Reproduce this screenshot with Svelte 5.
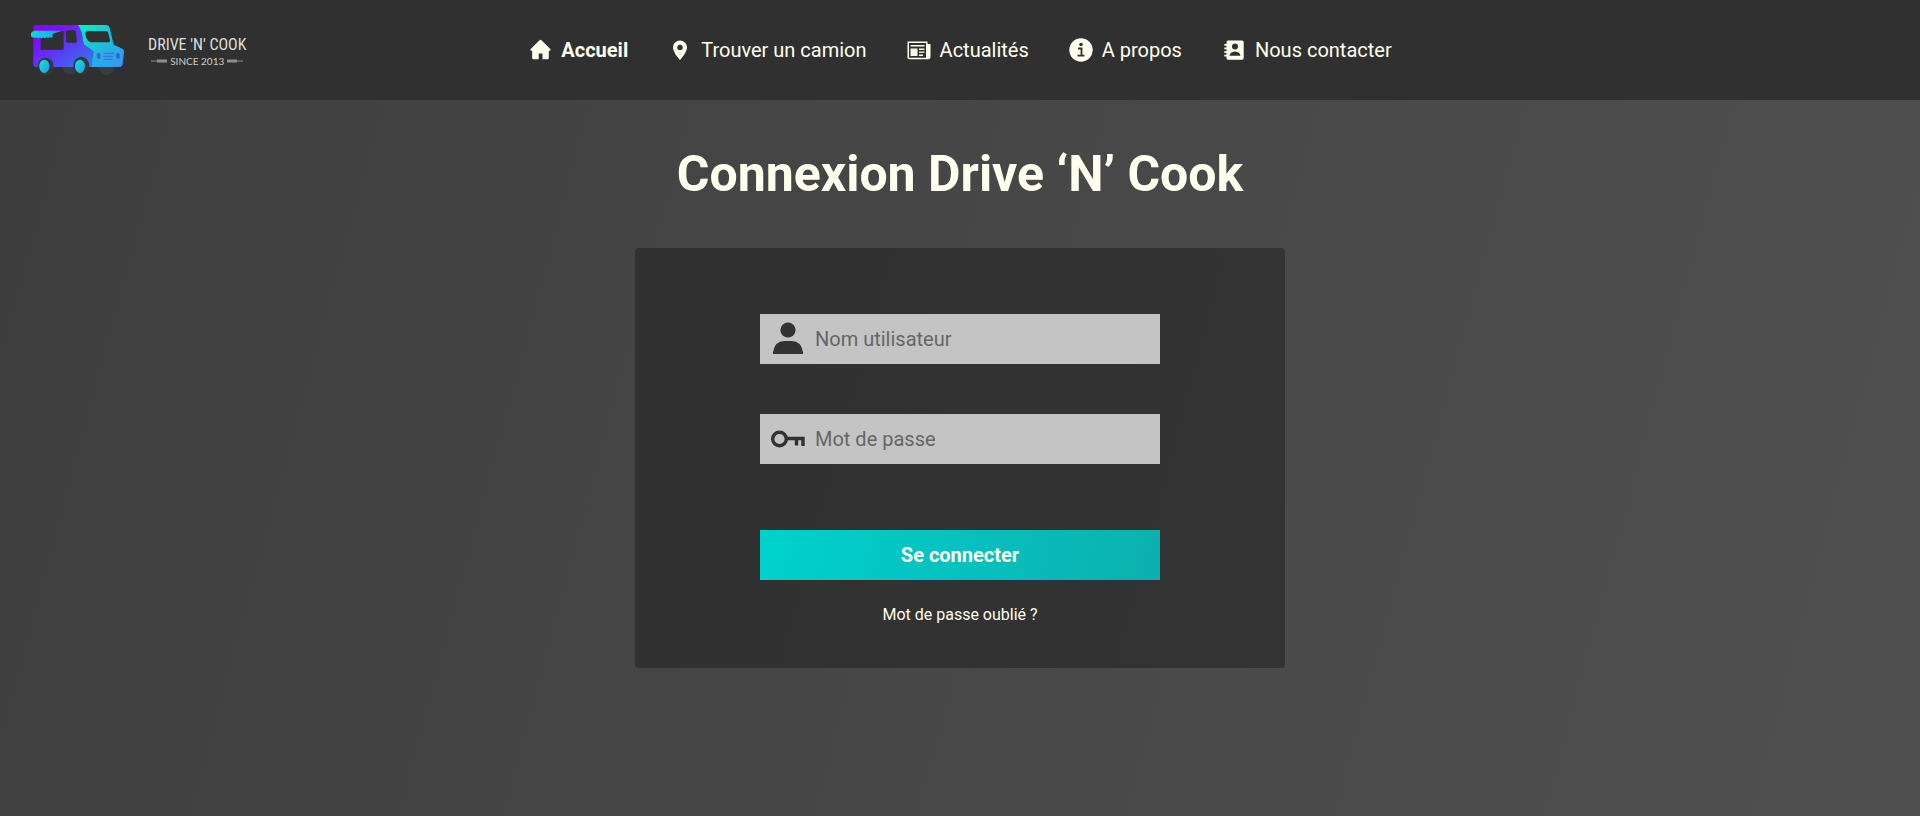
<script>
  const links = [
    { label: 'Accueil', icon: 'home', active: true },
    { label: 'Trouver un camion', icon: 'pin' },
    { label: 'Actualités', icon: 'news' },
    { label: 'A propos', icon: 'info' },
    { label: 'Nous contacter', icon: 'contact' }
  ];
</script>

<div class="page">
  <header>
    <a class="brand" href="#accueil">
      <svg class="truck" viewBox="30 36 288 168" aria-hidden="true">
        <defs>
          <linearGradient id="body" x1="0" y1="0" x2="1" y2="1">
            <stop offset="0" stop-color="#8c00ff" />
            <stop offset="0.3" stop-color="#7218fb" />
            <stop offset="1" stop-color="#2f80e8" />
          </linearGradient>
          <linearGradient id="cab" x1="0" y1="0" x2="0.8" y2="1">
            <stop offset="0" stop-color="#06f0c4" />
            <stop offset="0.5" stop-color="#18c2da" />
            <stop offset="1" stop-color="#329af0" />
          </linearGradient>
          <linearGradient id="awning" x1="0" y1="0" x2="1" y2="0">
            <stop offset="0" stop-color="#10d8d6" />
            <stop offset="0.7" stop-color="#1bb0e4" />
            <stop offset="1" stop-color="#4a5af2" />
          </linearGradient>
          <linearGradient id="wheel" x1="0" y1="0" x2="1" y2="1">
            <stop offset="0" stop-color="#08ead0" />
            <stop offset="1" stop-color="#2b96e8" />
          </linearGradient>
        </defs>
        <ellipse cx="150" cy="172" rx="22" ry="22" fill="#3b3b3e" />
        <ellipse cx="260" cy="172" rx="22" ry="23" fill="#3b3b3e" />
        <path d="M50 45H180L190 98L222 122L218 171H48Q40 171 40 162V55Q40 45 50 45Z" fill="url(#body)" />
        <path d="M174 45H258Q266 45 269 54L281 104L307 116Q313 119 312 127L308 162Q307 171 298 171H215L221 124L192 103Q187 90 187 78Q182 55 174 45Z" fill="url(#cab)" />
        <path d="M62 75L98 70L126 63H131V119H62Z" fill="#303030" />
        <path d="M143 61H161Q166 61 167 66L171 93Q171 98 166 98H142Q138 98 138 93V66Q138 61 143 61Z" fill="#303030" />
        <path d="M204 63H257Q263 63 265 69L270 90Q271 97 264 97H214Q207 97 203 91Q196 80 196 71Q196 63 204 63Z" fill="#303030" />
        <path d="M43 62H127L98 71V80Q94 86 90 81Q85 87 80 82Q75 88 70 82Q65 88 60 82Q55 88 51 82Q46 86 42 82Q36 84 33 79V70Q33 66 43 62Z" fill="url(#awning)" />
        <ellipse cx="77" cy="170" rx="24" ry="27" fill="#37373a" />
        <ellipse cx="184" cy="168" rx="24" ry="28" fill="#37373a" />
        <ellipse cx="73" cy="169" rx="15" ry="20" fill="url(#wheel)" />
        <ellipse cx="180" cy="169" rx="15" ry="20" fill="url(#wheel)" />
        <ellipse cx="236" cy="138" rx="6" ry="9" fill="#5654e6" />
        <ellipse cx="294" cy="138" rx="6" ry="9" fill="#5654e6" />
        <path d="M251 130H282M249 139H280M251 148H278" stroke="#3f68e0" stroke-width="3" />
      </svg>
      <span class="wordmark">
        <span class="name">DRIVE 'N' COOK</span>
        <span class="since">
          <svg viewBox="0 0 16 6" aria-hidden="true"><path d="M0 2.500H6V1.500H16V4.500H6V3.500H0Z" fill="#8e8e8e" /></svg>
          SINCE 2013
          <svg viewBox="0 0 16 6" aria-hidden="true"><path d="M16 2.500H10V1.500H0V4.500H10V3.500H16Z" fill="#8e8e8e" /></svg>
        </span>
      </span>
    </a>

    <nav>
      {#each links as link}
        <a href="#{link.icon}" class:active={link.active}>
          <svg viewBox="0 0 24 24" fill="currentColor" aria-hidden="true">
            {#if link.icon === 'home'}
              <path d="M12.500 1.800Q13 1.800 13.500 2.300L22.500 11.300Q23 12.800 21.700 12.800H20.800V20Q20.800 21.300 19.500 21.300H14.500V15.500H10.700V21.300H5.500Q4.200 21.300 4.200 20V12.800H3.200Q2 12.800 2.500 11.300L11.500 2.300Q12 1.800 12.500 1.800Z" />
            {:else if link.icon === 'pin'}
              <path fill-rule="evenodd" d="M12 2.500a7 7 0 0 0-7 7C5 14.500 12 22 12 22s7-7.500 7-12.500a7 7 0 0 0-7-7Zm0 4.200a2.700 2.700 0 1 1 0 5.400 2.700 2.700 0 0 1 0-5.400Z" />
            {:else if link.icon === 'news'}
              <path fill-rule="evenodd" d="M.5 3.500H20.500V6H23.500V19Q23.500 21.200 21.300 21.200H2.200Q.5 21.200 .5 19.500ZM2 5V19.700H19V5ZM3.500 7H17.500V8.500H3.500ZM3.500 10.500H10.500V18H3.500ZM12 10.500H17.500V12H12ZM12 13.500H17.500V14.800H12ZM12 16.500H16V18H12Z" />
            {:else if link.icon === 'info'}
              <circle cx="12" cy="12" r="11.700" />
              <circle cx="12" cy="6.500" r="1.800" fill="#303030" />
              <path d="M9 10.500H12.500V17.600M8.500 17.600H15.500" stroke="#303030" stroke-width="1.800" fill="none" />
            {:else}
              <path d="M6 2.500H20Q21.700 2.500 21.700 4.200V20Q21.700 21.800 20 21.800H6Q4.500 21.800 4.500 20V18.500H2.300V16.800H4.500V15H2.300V13.300H4.500V11.300H2.300V9.600H4.500V7.800H2.300V6.100H4.500V4Q4.500 2.500 6 2.500Z" />
              <circle cx="13" cy="8.600" r="3" fill="#303030" />
              <path d="M7.500 17.800Q8 13.800 13 13.500Q18 13.800 18.500 17.800Z" fill="#303030" />
            {/if}
          </svg>
          {link.label}
        </a>
      {/each}
    </nav>
  </header>

  <main>
    <h1>Connexion Drive ‘N’ Cook</h1>

    <form>
      <label class="field">
        <svg viewBox="0 0 34 34" fill="#323232" aria-hidden="true">
          <circle cx="17" cy="8" r="7.600" />
          <path d="M2 32V30Q4 19 13 19H21Q30 19 32 30V32Z" />
        </svg>
        <input type="text" placeholder="Nom utilisateur" aria-label="Nom utilisateur" />
      </label>
      <label class="field">
        <svg viewBox="0 0 34 34" fill="none" stroke="#323232" stroke-width="3.400" aria-hidden="true">
          <circle cx="8.500" cy="17" r="6.800" />
          <path d="M15.500 16.500H32V24M25.500 16.500V23.500" />
        </svg>
        <input type="password" placeholder="Mot de passe" aria-label="Mot de passe" />
      </label>
      <button type="button">Se connecter</button>
      <a class="forgot" href="#oubli">Mot de passe oublié ?</a>
    </form>
  </main>
</div>

<style>
  :global(body) {
    margin: 0;
  }

  .page {
    display: flex;
    flex-direction: column;
    min-height: 100vh;
    background: linear-gradient(105deg, #3e3e3e, #505050);
    color: #ffffee;
    font-family: Roboto, sans-serif;
    font-size: 20px;
  }

  a {
    color: inherit;
    text-decoration: none;
  }

  header {
    display: grid;
    grid-template-columns: 1fr auto 1fr;
    align-items: center;
    min-height: 100px;
    padding: 0 30px;
    box-sizing: border-box;
    background: #303030;
  }

  .brand {
    display: flex;
    align-items: center;
    gap: 22px;
  }

  .truck {
    width: 96px;
    height: 56px;
  }

  .wordmark {
    display: flex;
    flex-direction: column;
    align-items: center;
    padding-top: 2px;
    color: #dedede;
  }

  .name {
    font-family: "Liberation Sans Narrow", "Roboto Condensed", Roboto, sans-serif;
    font-size: 16px;
    line-height: 20px;
    white-space: nowrap;
  }

  .since {
    display: flex;
    align-items: center;
    gap: 3px;
    color: #cccccc;
    font-family: Lato, sans-serif;
    font-size: 10px;
    line-height: 12px;
    white-space: nowrap;
  }

  .since svg {
    width: 16px;
    height: 6px;
  }

  nav {
    display: flex;
    gap: 40px;
  }

  nav a {
    display: flex;
    align-items: center;
    gap: 9px;
    white-space: nowrap;
  }

  nav svg {
    width: 24px;
    height: 24px;
  }

  .active {
    font-weight: 700;
  }

  main {
    display: flex;
    flex-direction: column;
    align-items: center;
    padding: 44px 20px;
  }

  h1 {
    margin: 0 0 44px;
    font-size: 50px;
    line-height: 60px;
    font-weight: 700;
    text-align: center;
  }

  form {
    display: flex;
    flex-direction: column;
    align-items: center;
    width: 100%;
    max-width: 650px;
    padding: 66px 20px 42px;
    box-sizing: border-box;
    border-radius: 4px;
    background: linear-gradient(105deg, #313131, #333333);
  }

  .field,
  button {
    width: 100%;
    max-width: 400px;
    height: 50px;
    box-sizing: border-box;
  }

  .field {
    display: flex;
    align-items: center;
    gap: 10px;
    margin-bottom: 50px;
    padding: 0 11px;
    background: #c4c4c4;
  }

  .field svg {
    flex: none;
    width: 34px;
    height: 34px;
  }

  input {
    flex: 1;
    min-width: 0;
    padding: 0;
    border: 0;
    outline: 0;
    background: none;
    color: #323232;
    font: inherit;
  }

  input::placeholder {
    color: #666666;
    opacity: 1;
  }

  button {
    margin-top: 16px;
    border: 0;
    background: linear-gradient(105deg, #00d2d0, #0cb0ae);
    color: #ffffee;
    font: inherit;
    font-weight: 700;
    cursor: pointer;
  }

  .forgot {
    margin-top: 24px;
    font-size: 16px;
    line-height: 22px;
  }
</style>
